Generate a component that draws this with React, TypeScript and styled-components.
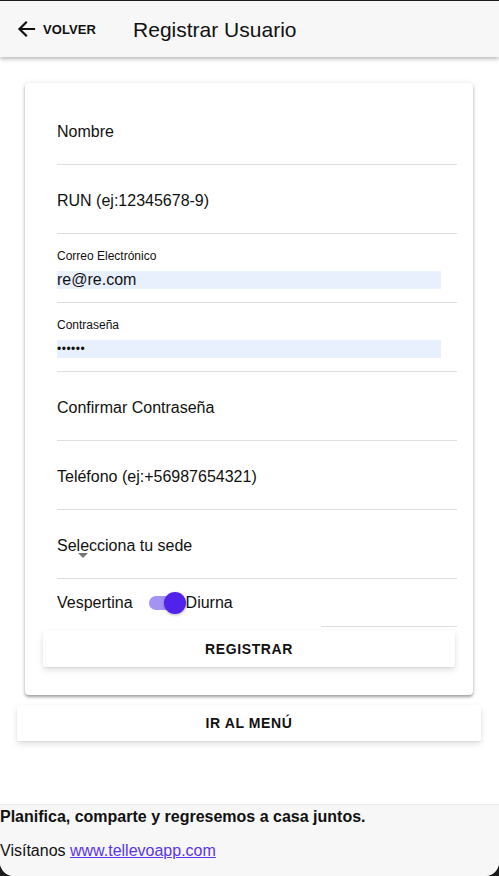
import React from 'react';
import styled, { createGlobalStyle } from 'styled-components';

const GlobalStyle = createGlobalStyle`
  html, body {
    margin: 0;
    padding: 0;
    background: #1c1c1c;
  }
  body {
    font-family: "Liberation Sans", Arial, sans-serif;
    color: #111;
  }
  * { box-sizing: border-box; }
`;

const Frame = styled.div`
  padding-top: 1px;
  background: #1c1c1c;
  width: 499px;
`;

const Screen = styled.div`
  width: 499px;
  min-height: 875px;
  display: flex;
  flex-direction: column;
  background: #fff;
  border-radius: 0 0 14px 14px;
  overflow: hidden;
`;

const Header = styled.header`
  height: 56px;
  display: flex;
  align-items: center;
  background: #f7f7f7;
  box-shadow: 0 2px 4px rgba(0, 0, 0, 0.28);
  position: relative;
  z-index: 1;
`;

const BackButton = styled.button`
  display: flex;
  align-items: center;
  gap: 7px;
  margin-left: 17px;
  padding: 0;
  border: none;
  background: none;
  font-family: inherit;
  font-size: 13px;
  font-weight: 700;
  color: #111;
  letter-spacing: 0.1px;
`;

const Title = styled.h1`
  margin: 1px 0 0 37px;
  font-size: 21px;
  font-weight: 400;
  color: #111;
`;

const Card = styled.div`
  margin: 26px 26px 0 25px;
  padding: 13px 16px 28px 32px;
  background: #fff;
  border-radius: 4px;
  box-shadow: 0 2px 3px rgba(0, 0, 0, 0.35), 0 0 6px rgba(0, 0, 0, 0.08);
`;

const Field = styled.div<{ $labeled?: boolean }>`
  height: 69px;
  padding-top: ${(p) => (p.$labeled ? '0' : '4px')};
  border-bottom: 1px solid #dedede;
  display: flex;
  flex-direction: column;
  justify-content: center;
  position: relative;
`;

const Placeholder = styled.span`
  font-size: 16px;
  color: #111;
`;

const SmallLabel = styled.span`
  font-size: 12px;
  color: #111;
  margin-top: 1px;
`;

const Filled = styled.div<{ $dots?: boolean }>`
  margin-top: 8px;
  margin-right: 16px;
  height: 18px;
  background: #e8effd;
  font-size: ${(p) => (p.$dots ? '12px' : '16px')};
  line-height: 18px;
  letter-spacing: ${(p) => (p.$dots ? '0.5px' : '0')};
  color: #111;
`;

const Caret = styled.span`
  position: absolute;
  left: 21px;
  top: 43px;
  width: 0;
  height: 0;
  border-left: 5px solid transparent;
  border-right: 5px solid transparent;
  border-top: 5px solid #777;
`;

const ToggleRow = styled.div`
  height: 47px;
  display: flex;
  align-items: center;
  font-size: 16px;
`;

const Track = styled.span`
  position: relative;
  width: 34px;
  height: 14px;
  border-radius: 7px;
  background: #a492f5;
  margin-left: 16px;
  margin-right: 3px;
`;

const Thumb = styled.span`
  position: absolute;
  right: -3px;
  top: -4px;
  width: 22px;
  height: 22px;
  border-radius: 50%;
  background: #5022ec;
  box-shadow: 0 1px 3px rgba(0, 0, 0, 0.3);
`;

const Rule = styled.div`
  height: 1px;
  background: #dedede;
  margin-left: 264px;
`;

const Button = styled.button<{ $wide?: boolean }>`
  display: block;
  width: ${(p) => (p.$wide ? '464px' : '412px')};
  height: 36px;
  margin: ${(p) => (p.$wide ? '10px 0 0 17px' : '4px 0 0 -14px')};
  border: none;
  border-radius: 2px;
  background: #fff;
  box-shadow: 0 3px 6px rgba(0, 0, 0, 0.12), 0 1px 2px rgba(0, 0, 0, 0.06);
  font-family: inherit;
  font-size: 14px;
  font-weight: 700;
  letter-spacing: 0.6px;
  color: #111;
`;

const Footer = styled.footer`
  margin-top: auto;
  background: #f7f7f7;
  border-top: 1px solid #ececec;
  padding: 1px 0 14px;
`;

const Slogan = styled.p`
  margin: 0;
  line-height: 22px;
  font-size: 16px;
  font-weight: 700;
`;

const Visit = styled.p`
  margin: 12px 0 0;
  line-height: 22px;
  font-size: 16px;
`;

const Link = styled.a`
  color: #5a34ee;
  text-decoration: underline;
`;

const fields: { kind: 'empty' | 'filled'; label: string; value?: string; dots?: boolean }[] = [
  { kind: 'empty', label: 'Nombre' },
  { kind: 'empty', label: 'RUN (ej:12345678-9)' },
  { kind: 'filled', label: 'Correo Electrónico', value: 're@re.com' },
  { kind: 'filled', label: 'Contraseña', value: '••••••', dots: true },
  { kind: 'empty', label: 'Confirmar Contraseña' },
  { kind: 'empty', label: 'Teléfono (ej:+56987654321)' },
];

export default function App() {
  return (
    <>
      <GlobalStyle />
      <Frame>
        <Screen>
          <Header>
            <BackButton>
              <svg width="19" height="18" viewBox="0 0 19 18" fill="none" stroke="#111" strokeWidth="2.2" strokeLinecap="square">
                <path d="M17 9H3" />
                <path d="M9 2.5L2.5 9L9 15.5" />
              </svg>
              VOLVER
            </BackButton>
            <Title>Registrar Usuario</Title>
          </Header>

          <Card>
            {fields.map((f) =>
              f.kind === 'empty' ? (
                <Field key={f.label}>
                  <Placeholder>{f.label}</Placeholder>
                </Field>
              ) : (
                <Field key={f.label} $labeled>
                  <SmallLabel>{f.label}</SmallLabel>
                  <Filled $dots={f.dots}>{f.value}</Filled>
                </Field>
              )
            )}
            <Field>
              <Placeholder>Selecciona tu sede</Placeholder>
              <Caret />
            </Field>
            <ToggleRow>
              Vespertina
              <Track>
                <Thumb />
              </Track>
              Diurna
            </ToggleRow>
            <Rule />
            <Button>REGISTRAR</Button>
          </Card>

          <Button $wide>IR AL MENÚ</Button>

          <Footer>
            <Slogan>Planifica, comparte y regresemos a casa juntos.</Slogan>
            <Visit>
              Visítanos <Link href="#">www.tellevoapp.com</Link>
            </Visit>
          </Footer>
        </Screen>
      </Frame>
    </>
  );
}
